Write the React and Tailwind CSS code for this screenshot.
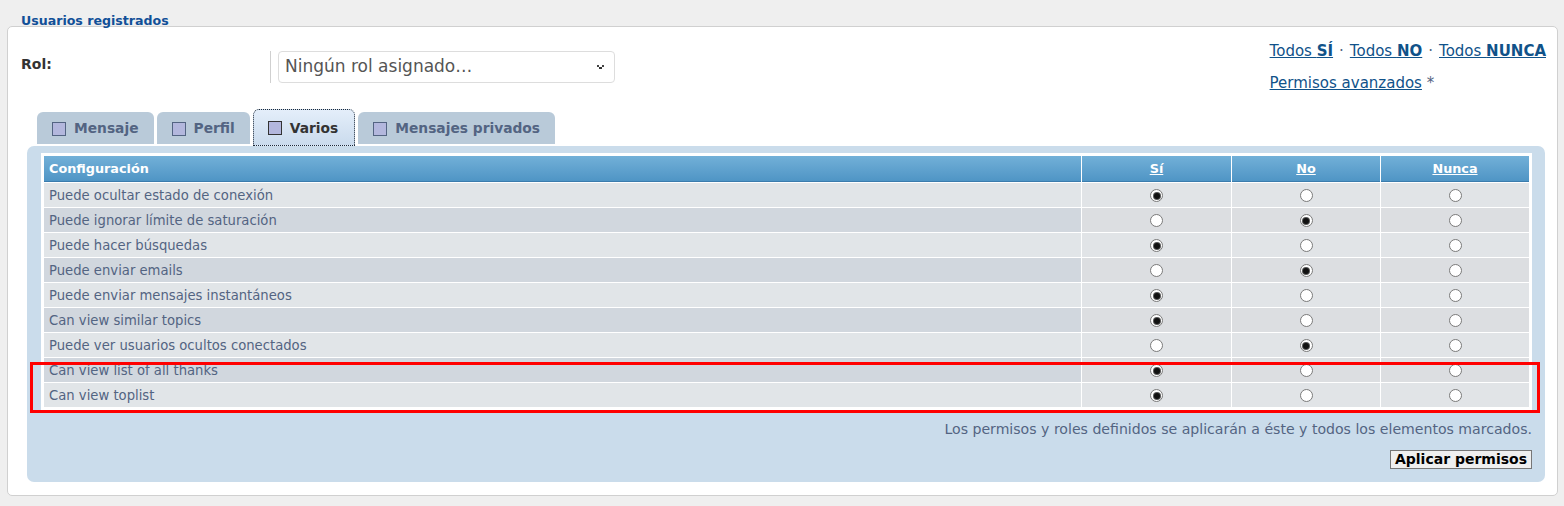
const rows = [
  ['Puede ocultar estado de conexión', 0],
  ['Puede ignorar límite de saturación', 1],
  ['Puede hacer búsquedas', 0],
  ['Puede enviar emails', 1],
  ['Puede enviar mensajes instantáneos', 0],
  ['Can view similar topics', 0],
  ['Puede ver usuarios ocultos conectados', 1],
  ['Can view list of all thanks', 0],
  ['Can view toplist', 0],
];

const tabs = ['Mensaje', 'Perfil', 'Varios', 'Mensajes privados'];

function Radio({ checked }) {
  return (
    <span className="flex h-[13px] w-[13px] items-center justify-center rounded-full border border-[#7a7a7a] bg-white">
      {checked && <span className="h-[6px] w-[6px] rounded-full bg-[#111] ring-1 ring-[#555]" />}
    </span>
  );
}

function Tab({ label, active }) {
  if (active) {
    return (
      <div className="flex h-[37px] items-center gap-[8px] rounded-t-[6px] border border-dotted border-[#1c2838] bg-gradient-to-b from-[#e4eefa] to-[#cadbed] pl-[14px] pr-[16px] pt-[1px]">
        <span className="h-[14px] w-[14px] border border-[#333] bg-[#b3b7dd]" />
        <span className="text-[13.8px] font-bold text-[#333]">{label}</span>
      </div>
    );
  }
  return (
    <div className="mb-[2px] flex h-[32px] items-center gap-[8px] rounded-t-[6px] bg-[#b9cad9] pl-[15px] pr-[15px] pt-[1px]">
      <span className="h-[14px] w-[14px] border border-[#536482] bg-[#b3b7dd]" />
      <span className="text-[13.8px] font-bold text-[#536482]">{label}</span>
    </div>
  );
}

export default function App() {
  return (
    <div className="h-[506px] w-full bg-[#efefef] pl-[7px] pr-[6px] font-['DejaVu_Sans',sans-serif]">
      {/* Legend */}
      <div className="h-[26px] pl-[14px] pt-[14px] text-[12.6px] font-bold leading-[14px] text-[#115098]">
        Usuarios registrados
      </div>

      <div className="rounded-[5px] border border-[#d0d0d0] bg-white pb-[13px]">
        {/* Rol + links */}
        <div className="flex items-start pt-[14px]">
          <div className="mt-[10px] flex items-start pl-[13px]">
            <span className="mt-[4px] w-[249px] text-[14px] font-bold leading-[18px] text-[#333]">Rol:</span>
            <div className="h-[32px] w-px bg-[#d0d0d0]" />
            <div className="ml-[7px] flex h-[32px] w-[337px] items-center justify-between rounded-[4px] border border-[#ddd] bg-white pl-[6px] pr-[10px]">
              <span className="text-[17px] text-[#555]">Ningún rol asignado…</span>
              <svg width="7" height="5" viewBox="0 0 7 5" className="mt-[1px]">
                <rect x="0" y="0" width="2" height="2" fill="#444" />
                <rect x="5" y="0" width="2" height="2" fill="#444" />
                <rect x="2" y="2" width="3" height="2" fill="#333" />
              </svg>
            </div>
          </div>
          <div className="ml-auto pr-[11px] pt-px text-[15px] leading-[18px]">
            <div className="text-[#536482]">
              <a className="text-[#105289] underline">Todos <b>SÍ</b></a>
              <span className="px-[6px]">·</span>
              <a className="text-[#105289] underline">Todos <b>NO</b></a>
              <span className="px-[6px]">·</span>
              <a className="text-[#105289] underline">Todos <b>NUNCA</b></a>
            </div>
            <div className="mt-[14px] text-[#536482]">
              <a className="text-[#105289] underline">Permisos avanzados</a> *
            </div>
          </div>
        </div>

        {/* Tabs */}
        <div className="ml-[29px] mt-[17px] flex h-[37px] items-end gap-[3px]">
          {tabs.map((t) => (
            <Tab key={t} label={t} active={t === 'Varios'} />
          ))}
        </div>

        {/* Panel */}
        <div className="relative ml-[19px] mr-[12px] rounded-[7px] bg-[#cadceb] pb-[13px] pl-[14px] pr-[13px] pt-[7px]">
          <div className="grid grid-cols-[1fr_149px_148px_148px] gap-px bg-white p-[3px]">
            <div className="flex h-[26px] items-center border-b border-[#3b7cad] bg-gradient-to-b from-[#72b0d8] to-[#4f95c5] pl-[5px] text-[12.8px] font-bold text-white">
              Configuración
            </div>
            {['Sí', 'No', 'Nunca'].map((h) => (
              <div key={h} className="flex h-[26px] items-center justify-center border-b border-[#3b7cad] bg-gradient-to-b from-[#72b0d8] to-[#4f95c5] text-[12.8px] font-bold text-white underline">
                {h}
              </div>
            ))}
            {rows.map(([label, sel], i) => {
              const even = i % 2 === 1;
              return [
                <div
                  key={label}
                  className={`flex h-[24px] items-center pl-[5px] pt-[2px] text-[13.2px] text-[#536482] ${even ? 'bg-[#d1d7de]' : 'bg-[#e1e5e8]'}`}
                >
                  {label}
                </div>,
                ...[0, 1, 2].map((c) => (
                  <div
                    key={label + c}
                    className={`flex h-[24px] items-center justify-center pt-px ${even ? 'bg-[#dcdee1]' : 'bg-[#e1e4e7]'}`}
                  >
                    <Radio checked={sel === c} />
                  </div>
                )),
              ];
            })}
          </div>

          <p className="mt-[10px] text-right text-[14.1px] leading-[19px] text-[#536482]">
            Los permisos y roles definidos se aplicarán a éste y todos los elementos marcados.
          </p>
          <div className="mt-[11px] flex justify-end">
            <button className="flex h-[19px] w-[142px] items-center justify-center border border-[#777] bg-[#efefef] text-[14px] font-bold text-black">
              Aplicar permisos
            </button>
          </div>

          {/* Highlight */}
          <div className="pointer-events-none absolute left-[3px] top-[216px] h-[51px] w-[1510px] border-[3px] border-[#ff0000]" />
        </div>
      </div>
    </div>
  );
}
